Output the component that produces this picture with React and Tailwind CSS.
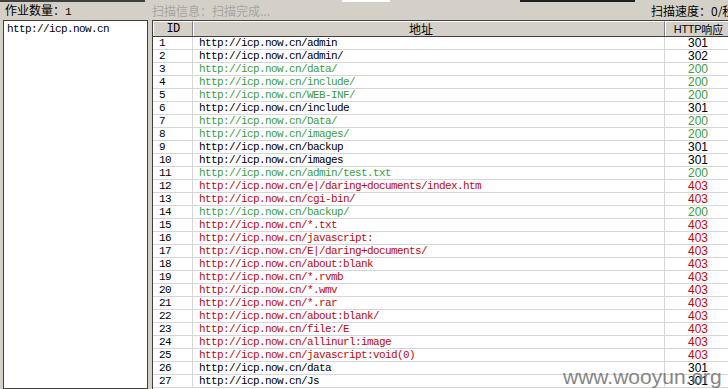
const K = "#000000";
const G = "#3d9d3d";
const R = "#c00a0a";

const rows = [
  ["/admin", "301", K],
  ["/admin/", "302", K],
  ["/data/", "200", G],
  ["/include/", "200", G],
  ["/WEB-INF/", "200", G],
  ["/include", "301", K],
  ["/Data/", "200", G],
  ["/images/", "200", G],
  ["/backup", "301", K],
  ["/images", "301", K],
  ["/admin/test.txt", "200", G],
  ["/e|/daring+documents/index.htm", "403", R],
  ["/cgi-bin/", "403", R],
  ["/backup/", "200", G],
  ["/*.txt", "403", R],
  ["/javascript:", "403", R],
  ["/E|/daring+documents/", "403", R],
  ["/about:blank", "403", R],
  ["/*.rvmb", "403", R],
  ["/*.wmv", "403", R],
  ["/*.rar", "403", R],
  ["/about:blank/", "403", R],
  ["/file:/E", "403", R],
  ["/allinurl:image", "403", R],
  ["/javascript:void(0)", "403", R],
  ["/data", "301", K],
  ["/Js", "301", K],
];

export default function App() {
  return (
    <div className="relative w-[728px] h-[389px] overflow-hidden bg-[#d4d0c8] font-['Noto_Sans_CJK_SC',sans-serif] text-black">
      <div className="flex h-[2px]">
        <div className="w-[145px] bg-[#404040]" />
        <div className="w-[197px]" />
        <div className="w-[48px] bg-white" />
        <div className="w-[130px]" />
        <div className="w-[115px] bg-[#202020]" />
      </div>
      <div className="flex h-[18px] items-center text-[12px] leading-none whitespace-nowrap">
        <div className="w-[152px] pl-[5px]">
          作业数量：<span className="font-['Liberation_Mono',monospace] text-[11px]">1</span>
        </div>
        <div className="text-[#a4a4a4]">扫描信息：扫描完成...</div>
        <div className="ml-auto w-[77px] overflow-hidden">扫描速度：0/秒</div>
      </div>
      <div className="flex h-[369px]">
        <div className="ml-[3px] w-[145px] h-full border border-[#404040] bg-white pt-[2px] pl-[3px] font-['Liberation_Mono',monospace] text-[11px] leading-[13px] tracking-[-0.6px]">
          http://icp.now.cn
        </div>
        <div className="ml-[4px] flex-1 h-full overflow-hidden border-l border-t border-[#404040] bg-white">
          <div className="flex h-[16px] w-[580px] bg-[#d4d0c8] border-b border-[#404040] text-[11px] leading-none">
            <div className="w-[40px] shrink-0 flex items-center justify-center border-t border-l border-white border-r border-r-[#808080] font-['Liberation_Mono',monospace] text-[12px] tracking-[-0.6px]">
              ID
            </div>
            <div className="w-[472px] shrink-0 flex items-center justify-center pr-[16px] border-t border-l border-white border-r border-r-[#808080] text-[12px]">
              地址
            </div>
            <div className="w-[66px] shrink-0 flex items-center justify-center border-t border-l border-white">
              <span className="font-['Liberation_Sans',sans-serif] tracking-[-0.3px]">HTTP</span>
              <span>响应</span>
            </div>
          </div>
          {rows.map(([path, code, color], i) => (
            <div key={i} className="flex h-[13px] w-[580px] border-b border-[#d6d6d6] text-[11px] leading-[12px]">
              <div className="w-[40px] shrink-0 pl-[6px] border-r border-[#d6d6d6] font-['Liberation_Mono',monospace] tracking-[-0.6px]">
                {i + 1}
              </div>
              <div
                className="w-[472px] shrink-0 pl-[6px] border-r border-[#d6d6d6] font-['Liberation_Mono',monospace] tracking-[-0.6px] whitespace-nowrap"
                style={{ color }}
              >
                http://icp.now.cn{path}
              </div>
              <div
                className="w-[66px] shrink-0 text-center font-['Liberation_Sans',sans-serif] text-[12px]"
                style={{ color }}
              >
                {code}
              </div>
            </div>
          ))}
        </div>
      </div>
      <div className="absolute left-[563px] top-[366px] text-[21px] leading-none font-['Liberation_Sans',sans-serif] text-[#6a6a6a] opacity-80 whitespace-nowrap">
        www.wooyun.org
      </div>
    </div>
  );
}
